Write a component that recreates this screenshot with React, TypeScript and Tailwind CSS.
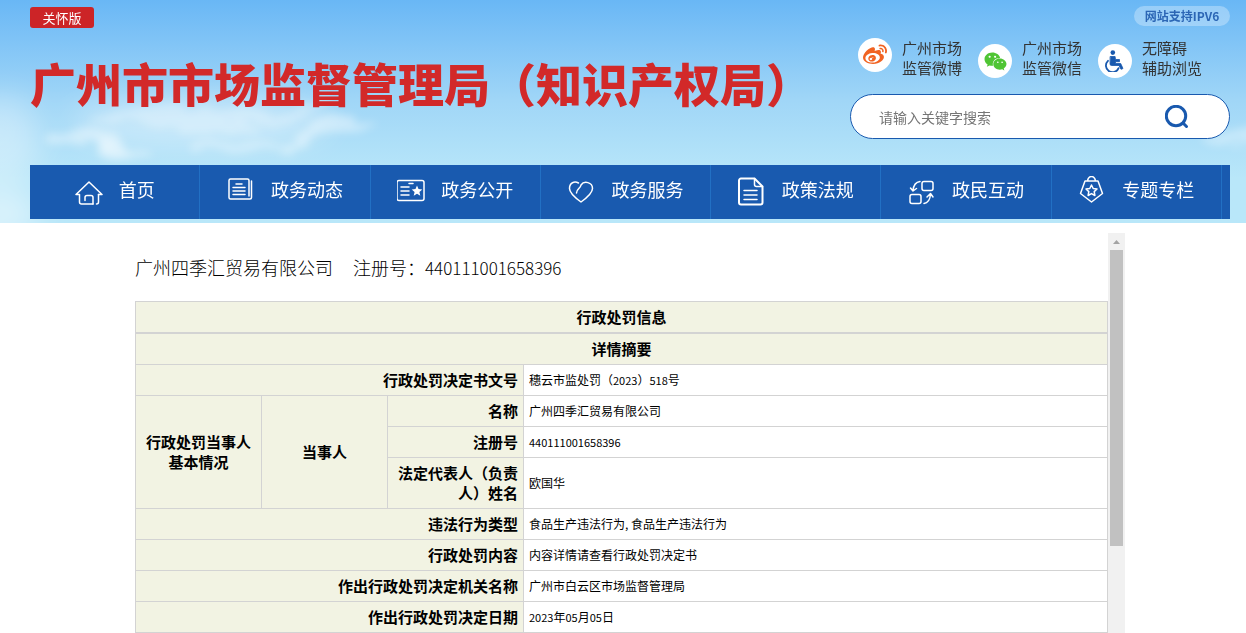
import React, { useState } from 'react';
import { FaWeibo, FaWeixin } from 'react-icons/fa';

interface NavItem {
  label: string;
  icon: React.ReactNode;
}

interface ServiceLink {
  lines: [string, string];
  icon: React.ReactNode;
  align: string;
}

const navItems: NavItem[] = [
  {
    label: '首页',
    icon: (
      <>
        <path d="M1 18.5 14 6l13 12.5h-3.5M1 18.5h3.5v7.5a2 2 0 0 0 2 2H18" />
        <path d="M10 24.500v-3a2 2 0 0 1 2-2h4a2 2 0 0 1 2 2V28M23.500 18.500V26a2 2 0 0 1-2 2" />
      </>
    ),
  },
  {
    label: '政务动态',
    icon: (
      <>
        <path d="M22 20V4.500a1.500 1.500 0 0 0-1.500-1.500H3.500A1.500 1.500 0 0 0 2 4.500v17A1.500 1.500 0 0 0 3.500 23H23a1.500 1.500 0 0 0 1.500-1.500V5" />
        <path d="M9 8h6M6 11.500h12M6 15h12M6 18.500h12" />
      </>
    ),
  },
  {
    label: '政务公开',
    icon: (
      <>
        <rect x="0" y="4.500" width="27" height="20" rx="2" />
        <path d="M4 11h8M4 15h8M4 19h8M12 7.500h4" />
        <path d="m20 9.500 1.500 3.500 3.800.4-2.900 2.500.9 3.800-3.300-2-3.300 2 .9-3.800-2.900-2.500 3.800-.4z" fill="currentColor" stroke="none" />
      </>
    ),
  },
  {
    label: '政务服务',
    icon: (
      <path d="M9.500 17c0-4 4-4.500 4.500-8C17 4.500 25.500 6 25.500 12.500c0 5-6 9.500-11.500 13.500C8.500 22 2.500 17.500 2.500 12.500c0-6 5-7.500 9-5.500" />
    ),
  },
  {
    label: '政策法规',
    icon: (
      <>
        <path d="M3 2.500h13.500l8 8v16a2 2 0 0 1-2 2H3a2 2 0 0 1-2-2v-22a2 2 0 0 1 2-2z" strokeWidth="2" />
        <path d="M16.500 2.500v6a2 2 0 0 0 2 2h6M6 14.500h13M6 19h13M6 23.500h13" />
      </>
    ),
  },
  {
    label: '政民互动',
    icon: (
      <>
        <rect x="14" y="5.500" width="11" height="9" rx="2" />
        <rect x="2" y="18.500" width="11" height="9" rx="2" />
        <path d="M12 5.500C8 6 5.500 9.500 5 14.500M2.500 12 5 15l3.500-2.500M16 27.500c4-.5 6-4 6.500-9M19 21l3.500-3.500L25 21" />
      </>
    ),
  },
  {
    label: '专题专栏',
    icon: (
      <>
        <path d="M7 5h13l4.500 12.500-11 8.500-11-8.500zM9.500 5C10 2 12 .5 13.500.5S17 2 17.500 5" />
        <path d="m13.500 9 1.700 3.500 3.800.5-2.800 2.600.7 3.900-3.400-1.900-3.400 1.900.7-3.900L8 13l3.800-.5z" />
      </>
    ),
  },
];

const WheelchairIcon: React.FC = () => (
  <svg width="20" height="22" viewBox="0 0 20 22" fill="none" stroke="#1959ae" strokeLinecap="round" strokeLinejoin="round">
    <circle cx="7.800" cy="2.600" r="2.300" fill="#1959ae" stroke="none" />
    <path d="M5.500 6.500h4.600l.4 3h4v2.200h-4v1.800h5.200l2.300 5-2 .8-2-3.800H6.500a1.500 1.500 0 0 1-1.500-1.500z" fill="#1959ae" strokeWidth=".8" />
    <path d="M3 10.800a6.600 6.600 0 1 0 10.600 7.400" strokeWidth="1.800" />
  </svg>
);

const serviceLinks: ServiceLink[] = [
  {
    lines: ['广州市场', '监管微博'],
    icon: <FaWeibo size={24} className="text-[#f16322]" />,
    align: 'self-start',
  },
  {
    lines: ['广州市场', '监管微信'],
    icon: <FaWeixin size={23} className="text-[#4fc534]" />,
    align: 'self-end',
  },
  {
    lines: ['无障碍', '辅助浏览'],
    icon: <WheelchairIcon />,
    align: 'self-end',
  },
];

// Soft clouds drawn over the sky gradient
const Clouds: React.FC = () => (
  <svg className="absolute inset-0 h-full w-full" aria-hidden="true">
    <defs>
      <filter id="haze" x="-50%" y="-100%" width="200%" height="300%">
        <feGaussianBlur stdDeviation="16" />
      </filter>
      <filter id="puff" x="-50%" y="-100%" width="200%" height="300%">
        <feTurbulence type="fractalNoise" baseFrequency="0.02 0.04" numOctaves="3" seed="4" result="noise" />
        <feDisplacementMap in="SourceGraphic" in2="noise" scale="36" xChannelSelector="R" yChannelSelector="G" />
        <feGaussianBlur stdDeviation="4" />
      </filter>
    </defs>
    <g fill="#fff" filter="url(#haze)">
      <ellipse cx="200" cy="122" rx="130" ry="24" opacity=".4" />
      <ellipse cx="0" cy="140" rx="40" ry="44" opacity=".35" />
      <ellipse cx="0" cy="215" rx="40" ry="24" opacity=".5" />
    </g>
    <g fill="#fff" filter="url(#puff)">
      <ellipse cx="180" cy="118" rx="90" ry="10" opacity=".25" />
      <ellipse cx="90" cy="140" rx="42" ry="9" transform="rotate(12 90 140)" opacity=".4" />
      <ellipse cx="125" cy="153" rx="26" ry="7" transform="rotate(12 125 153)" opacity=".35" />
      <ellipse cx="235" cy="145" rx="50" ry="8" opacity=".3" />
      <ellipse cx="325" cy="134" rx="46" ry="8" transform="rotate(-16 325 134)" opacity=".4" />
      <ellipse cx="300" cy="112" rx="36" ry="7" transform="rotate(-16 300 112)" opacity=".25" />
      <ellipse cx="1236" cy="138" rx="34" ry="10" opacity=".35" />
    </g>
  </svg>
);

const SearchBox: React.FC = () => {
  const [keyword, setKeyword] = useState<string>('');

  return (
    <form
      onSubmit={(e) => e.preventDefault()}
      className="mt-4 flex h-[45px] items-center rounded-full border border-[#1959ae] bg-white pr-10 pl-7"
    >
      <input
        type="text"
        aria-label="请输入关键字搜索"
        placeholder="请输入关键字搜索"
        value={keyword}
        onChange={(e) => setKeyword(e.target.value)}
        className="min-w-0 flex-1 text-sm text-gray-800 outline-none placeholder:text-[#757575]"
      />
      <button type="submit" aria-label="搜索" className="text-[#1959ae]">
        <svg width="24" height="24" viewBox="0 0 24 24" fill="none" stroke="currentColor" strokeWidth="3">
          <circle cx="11" cy="11" r="9.700" />
          <path d="m18 18 3.500 3.500" strokeLinecap="round" />
        </svg>
      </button>
    </form>
  );
};

const Header: React.FC = () => (
  <header className="relative bg-linear-to-b from-[#69b7f5] via-[#a0d6f7] via-45% to-[#b9e7f9] to-80% pb-1">
    <Clouds />
    <div className="relative pr-4 pl-[30px]">
      <div className="flex justify-between">
        <div className="pt-[7px]">
          <button type="button" className="block h-[21px] w-16 rounded-[3px] bg-[#cc2427] text-[13px] leading-5 text-white">
            关怀版
          </button>
          <h1 className="mt-6 text-[46px] leading-[60px] font-black whitespace-nowrap text-[#d22929]">
            广州市市场监督管理局（知识产权局）
          </h1>
        </div>
        <div className="w-[380px] shrink-0 pt-[6px] pb-[26px]">
          <div className="flex justify-end">
            <a href="#ipv6" className="h-5 w-24 rounded-full bg-white/30 text-center text-xs leading-5 font-bold text-[#2c66b5]">
              网站支持IPV6
            </a>
          </div>
          <div className="mt-3 flex pl-2">
            {serviceLinks.map((link) => (
              <a key={link.lines[1]} href="#service" className="flex w-[120px] gap-[10px] text-[15px] leading-5 text-[#333]">
                <span className={`flex size-[34px] items-center justify-center rounded-full bg-white ${link.align}`}>
                  {link.icon}
                </span>
                <span>
                  {link.lines[0]}
                  <br />
                  {link.lines[1]}
                </span>
              </a>
            ))}
          </div>
          <SearchBox />
        </div>
      </div>
      <nav className="grid grid-cols-7 bg-[#195aaf] pr-2">
        {navItems.map((item) => (
          <a
            key={item.label}
            href="#nav"
            className="flex h-[54px] items-center justify-center gap-4 border-r border-[#2270c4] text-lg leading-6 text-white"
          >
            <svg
              width="28"
              height="32"
              viewBox="0 0 28 32"
              fill="none"
              stroke="currentColor"
              strokeWidth="1.5"
              strokeLinecap="round"
              strokeLinejoin="round"
              className="shrink-0"
            >
              {item.icon}
            </svg>
            <span className="pb-[6px]">{item.label}</span>
          </a>
        ))}
      </nav>
    </div>
  </header>
);

const Scrollbar: React.FC = () => (
  <div className="flex w-[17px] shrink-0 flex-col items-center bg-[#f1f1f1]" aria-hidden="true">
    <div className="flex h-[17px] items-center">
      <svg width="7" height="4" viewBox="0 0 7 4" fill="#a3a3a3">
        <path d="M0 4 3.500 0 7 4z" />
      </svg>
    </div>
    <div className="h-[296px] w-[13px] bg-[#c1c1c1]" />
  </div>
);

// Digits run slightly smaller than the Chinese text around them
const Num: React.FC<{ children: string }> = ({ children }) => <span className="text-[11px]">{children}</span>;

const th = 'border border-[#d3d3d3] bg-[#f2f3e3] px-[5px] py-[5px] text-[15px] leading-5 font-bold';
const td = 'border border-[#d3d3d3] bg-white px-[5px] text-xs leading-5';

const PenaltyTable: React.FC = () => (
  <div className="text-black">
    <table className="w-full border-collapse">
      <thead>
        <tr>
          <th className={th}>行政处罚信息</th>
        </tr>
      </thead>
    </table>
    <table className="w-full table-fixed border-collapse">
      <colgroup>
        <col className="w-[126px]" />
        <col className="w-[126px]" />
        <col className="w-[136px]" />
        <col />
      </colgroup>
      <tbody>
        <tr>
          <th colSpan={4} className={th}>详情摘要</th>
        </tr>
        <tr>
          <th colSpan={3} className={`${th} text-right`}>行政处罚决定书文号</th>
          <td className={td}>
            穗云市监处罚（<Num>2023</Num>）<Num>518</Num>号
          </td>
        </tr>
        <tr>
          <th rowSpan={3} className={th}>行政处罚当事人基本情况</th>
          <th rowSpan={3} className={th}>当事人</th>
          <th className={`${th} text-right`}>名称</th>
          <td className={td}>广州四季汇贸易有限公司</td>
        </tr>
        <tr>
          <th className={`${th} text-right`}>注册号</th>
          <td className={td}>
            <Num>440111001658396</Num>
          </td>
        </tr>
        <tr>
          <th className={`${th} text-right`}>法定代表人（负责人）姓名</th>
          <td className={td}>欧国华</td>
        </tr>
        <tr>
          <th colSpan={3} className={`${th} text-right`}>违法行为类型</th>
          <td className={td}>食品生产违法行为, 食品生产违法行为</td>
        </tr>
        <tr>
          <th colSpan={3} className={`${th} text-right`}>行政处罚内容</th>
          <td className={td}>内容详情请查看行政处罚决定书</td>
        </tr>
        <tr>
          <th colSpan={3} className={`${th} text-right`}>作出行政处罚决定机关名称</th>
          <td className={td}>广州市白云区市场监督管理局</td>
        </tr>
        <tr>
          <th colSpan={3} className={`${th} text-right`}>作出行政处罚决定日期</th>
          <td className={td}>
            <Num>2023</Num>年<Num>05</Num>月<Num>05</Num>日
          </td>
        </tr>
      </tbody>
    </table>
  </div>
);

const App: React.FC = () => (
  <div className="bg-white font-['Noto_Sans_CJK_SC',sans-serif]" lang="zh-CN">
    <Header />
    <main className="pt-[10px] pr-4 pl-[30px]">
      <div className="mx-auto flex max-w-[990px]">
        <div className="min-w-0 flex-1">
          <h2 className="flex gap-5 pt-5 pb-5 text-lg leading-7 font-light text-black">
            <span>广州四季汇贸易有限公司</span>
            <span>
              注册号：<span className="text-[17px] leading-4">440111001658396</span>
            </span>
          </h2>
          <PenaltyTable />
        </div>
        <Scrollbar />
      </div>
    </main>
  </div>
);

export default App;
